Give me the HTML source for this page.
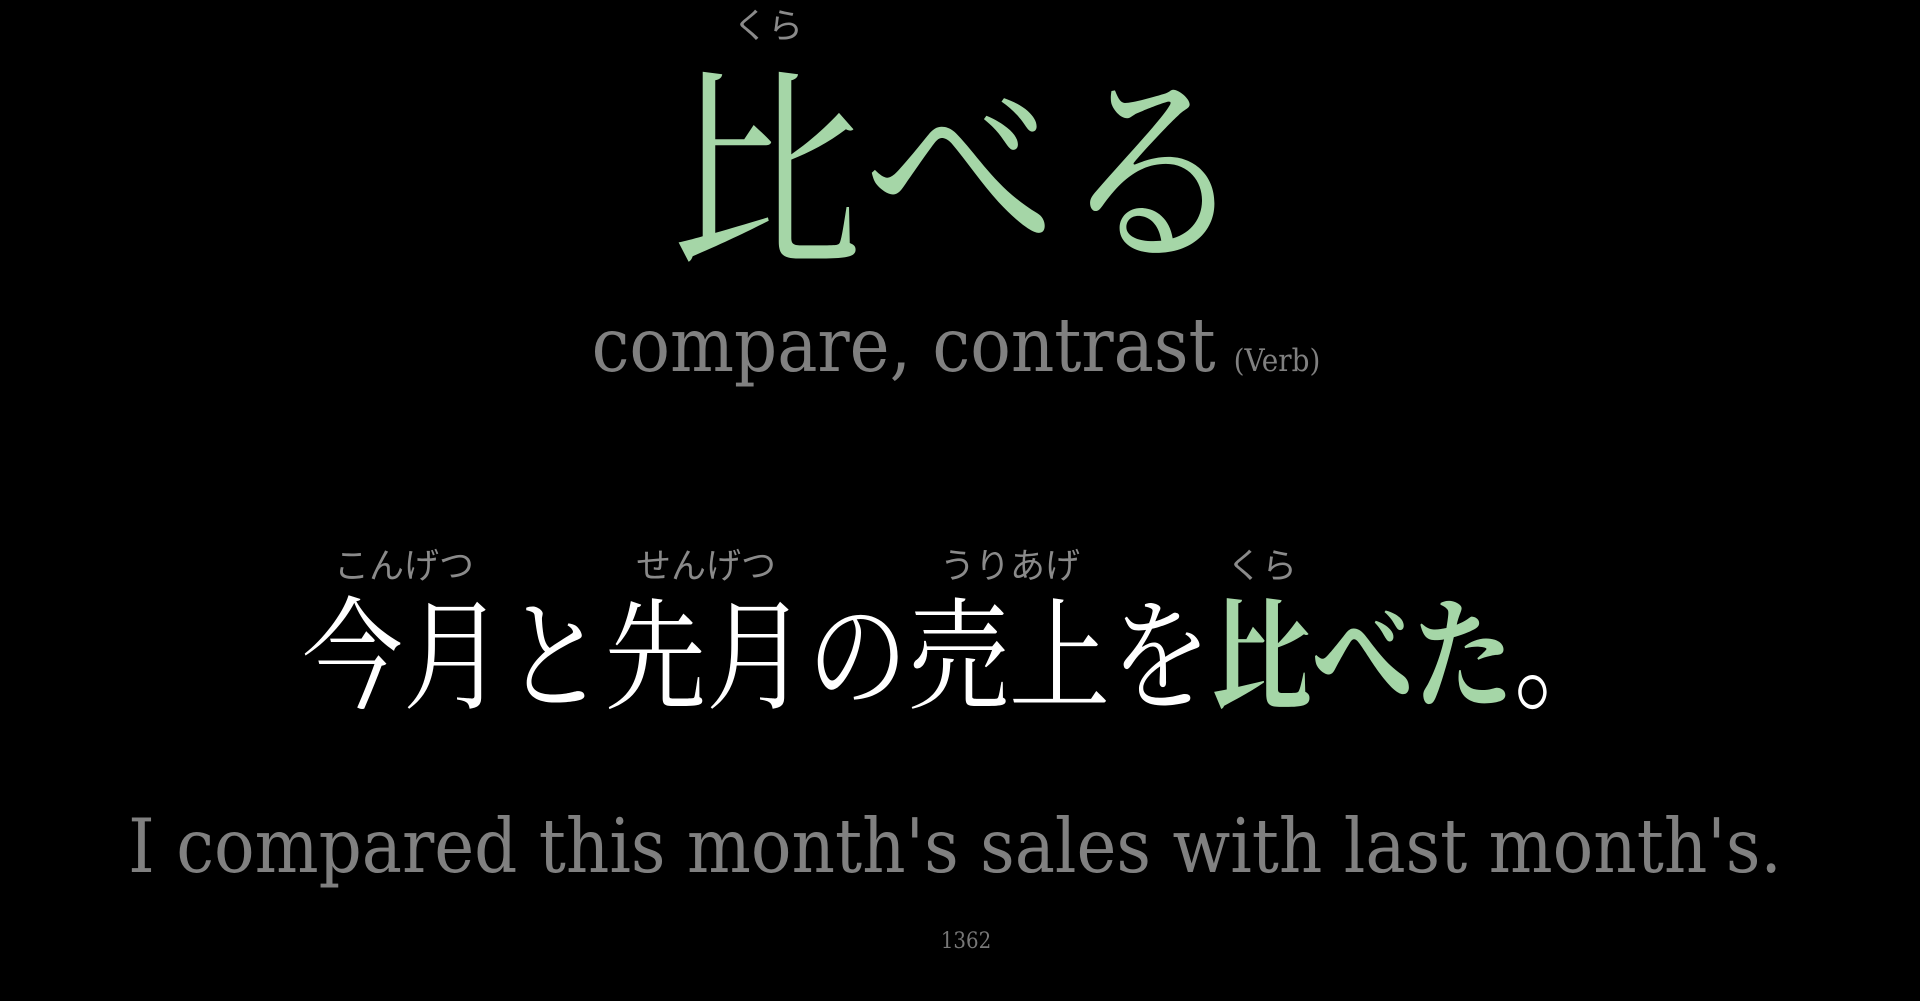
<!DOCTYPE html>
<html><head><meta charset="utf-8"><style>
html,body{margin:0;padding:0;background:#000;width:1920px;height:1001px;overflow:hidden;}
.a{position:absolute;white-space:nowrap;}
.jp{font-family:"Liberation Serif","Noto Serif CJK JP","Noto Serif CJK SC",serif;}
.fu{font-family:"Liberation Sans","Noto Sans CJK JP",sans-serif;color:#8a8a8a;font-size:35px;line-height:38px;text-align:center;}
.en{font-family:"DejaVu Serif",serif;font-stretch:condensed;color:#808080;}
.g{color:#a5d6a7;}
</style></head><body>
<div class="a fu" style="left:718px;top:8px;width:100px;">くら</div>
<div class="a jp g" style="left:10px;width:1900px;top:70px;font-size:193px;line-height:193px;text-align:center;transform:scaleY(1.10);transform-origin:50% 0;">比べる</div>
<div class="a en" style="left:0;width:1912px;top:308px;font-size:75px;line-height:75px;text-align:center;">compare, contrast<span style="font-size:31px;margin-left:18px;">(Verb)</span></div>

<div class="a fu" style="left:304px;top:548px;width:200px;">こんげつ</div>
<div class="a fu" style="left:606px;top:548px;width:200px;">せんげつ</div>
<div class="a fu" style="left:910px;top:548px;width:200px;">うりあげ</div>
<div class="a fu" style="left:1212px;top:548px;width:100px;">くら</div>
<div class="a jp" style="left:302px;top:598px;font-size:101px;line-height:101px;color:#fff;transform:scaleY(1.2);transform-origin:0 0;">今月と先月の売上を<span class="g" style="font-weight:bold;">比べた</span>。</div>

<div class="a en" style="left:0;width:1910px;top:809px;font-size:75px;line-height:75px;text-align:center;">I compared this month's sales with last month's.</div>
<div class="a en" style="left:0;width:1932px;top:931px;font-size:22px;line-height:22px;text-align:center;color:#777;">1362</div>
</body></html>
